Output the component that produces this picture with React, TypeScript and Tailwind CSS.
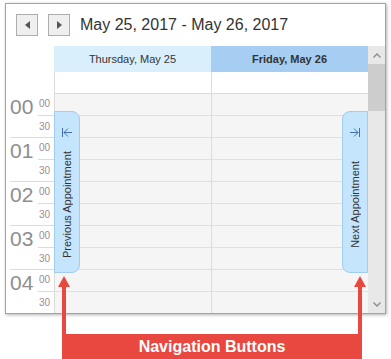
import React from "react";

const hours = ["00", "01", "02", "03", "04"];
const slots = Array.from({ length: 10 }, (_, i) => i);

function NavBtn({ dir }: { dir: "left" | "right" }) {
  return (
    <div className="w-[22px] h-[22px] border border-[#adadad] bg-[#efefef] flex items-center justify-center">
      <svg width="5" height="8" viewBox="0 0 5 8">
        {dir === "left" ? (
          <polygon points="5,0 5,8 0,4" fill="#555" />
        ) : (
          <polygon points="0,0 0,8 5,4" fill="#555" />
        )}
      </svg>
    </div>
  );
}

function Ruler() {
  return (
    <div className="w-[48px] shrink-0 flex flex-col bg-white">
      <div className="h-[48px] shrink-0" />
      {hours.map((h) => (
        <div key={h} className="ml-[4px] h-[44px] shrink-0 border-b border-[#dcdcdc] flex">
          <div className="w-[28px] pt-[2px] text-[21px] leading-[21px] text-[#8e8e8e]">{h}</div>
          <div className="w-[16px] flex flex-col">
            <div className="h-[22px] border-b border-[#dcdcdc] pl-[1px] pt-[5px] text-[10px] leading-[10px] text-[#9a8b96]">
              00
            </div>
            <div className="h-[21px] pl-[1px] pt-[6px] text-[10px] leading-[10px] text-[#9a8b96]">30</div>
          </div>
        </div>
      ))}
    </div>
  );
}

function DayColumn() {
  return (
    <div className="w-[157px] border-l border-[#dcdcdc] flex flex-col">
      <div className="h-[22px] shrink-0 border-b border-[#dcdcdc] bg-white" />
      {slots.map((s) => (
        <div key={s} className="h-[22px] shrink-0 border-b border-[#e0e0e0] bg-[#f5f5f5]" />
      ))}
    </div>
  );
}

function Scrollbar() {
  return (
    <div className="w-[17px] shrink-0 bg-[#e8e8e8] flex flex-col">
      <div className="h-[18px] flex items-center justify-center">
        <svg width="8" height="5" viewBox="0 0 8 5">
          <polyline points="0.5,4.5 4,1 7.5,4.5" fill="none" stroke="#8a8a8a" strokeWidth="1.3" />
        </svg>
      </div>
      <div className="h-[47px] bg-[#cdcdcd]" />
      <div className="flex-1" />
      <div className="h-[18px] flex items-center justify-center">
        <svg width="8" height="5" viewBox="0 0 8 5">
          <polyline points="0.5,0.5 4,4 7.5,0.5" fill="none" stroke="#8a8a8a" strokeWidth="1.3" />
        </svg>
      </div>
    </div>
  );
}

function ApptButton({ side }: { side: "prev" | "next" }) {
  const isPrev = side === "prev";
  return (
    <div
      className={
        isPrev
          ? "absolute left-[48px] top-[107px] w-[26px] h-[162px] bg-[#c4e5fc] border border-[#9fccf0] rounded-r-[8px] flex flex-col items-center"
          : "absolute left-[336px] top-[107px] w-[26px] h-[162px] bg-[#c4e5fc] border border-[#9fccf0] rounded-l-[8px] flex flex-col items-center"
      }
    >
      <div className="pt-[16px]">
        <svg width="10" height="9" viewBox="0 0 10 9">
          {isPrev ? (
            <g fill="none" stroke="#3f6fae" strokeWidth="1">
              <line x1="0.5" y1="0" x2="0.5" y2="9" />
              <line x1="2" y1="4.5" x2="10" y2="4.5" />
              <polyline points="6,0.5 2,4.5 6,8.5" />
            </g>
          ) : (
            <g fill="none" stroke="#3f6fae" strokeWidth="1">
              <line x1="9.5" y1="0" x2="9.5" y2="9" />
              <line x1="0" y1="4.5" x2="8" y2="4.5" />
              <polyline points="4,0.5 8,4.5 4,8.5" />
            </g>
          )}
        </svg>
      </div>
      <div className="flex-1 flex items-center justify-center">
        <span className="[writing-mode:vertical-rl] rotate-180 text-[11px] leading-[12px] text-[#333] whitespace-nowrap">
          {isPrev ? "Previous Appointment" : "Next Appointment"}
        </span>
      </div>
    </div>
  );
}

function Arrow() {
  return (
    <svg width="12" height="58" viewBox="0 0 12 58">
      <polygon points="6,0 12,11 8,11 8,58 4,58 4,11 0,11" fill="#e8483f" />
    </svg>
  );
}

export default function App() {
  return (
    <div
      className="relative w-[391px] h-[359px] bg-white overflow-hidden"
      style={{ fontFamily: '"Liberation Sans", Arial, sans-serif' }}
    >
      <div className="ml-[5px] mt-[3px] w-[381px] h-[311px] border border-[#a3a3a3] shadow-[1px_1px_3px_rgba(0,0,0,0.3)] bg-white flex flex-col relative overflow-hidden">
        <div className="h-[42px] shrink-0 flex items-center pl-[10px]">
          <NavBtn dir="left" />
          <div className="ml-[10px]">
            <NavBtn dir="right" />
          </div>
          <span className="ml-[10px] text-[16px] leading-[16px] text-[#333]">May 25, 2017 - May 26, 2017</span>
        </div>
        <div className="flex flex-1 min-h-0">
          <Ruler />
          <div className="w-[314px] shrink-0 flex flex-col">
            <div className="h-[26px] shrink-0 flex">
              <div className="w-[157px] bg-[#daeffc] flex items-center justify-center text-[11px] text-[#333]">
                Thursday, May 25
              </div>
              <div className="w-[157px] bg-[#a6cef2] flex items-center justify-center text-[11px] font-bold text-[#333]">
                Friday, May 26
              </div>
            </div>
            <div className="flex flex-1 min-h-0 overflow-hidden">
              <DayColumn />
              <DayColumn />
            </div>
          </div>
          <Scrollbar />
        </div>
        <ApptButton side="prev" />
        <ApptButton side="next" />
      </div>
      <div className="absolute left-[58px] top-[276px] w-[308px] h-[83px] flex flex-col">
        <div className="h-[58px] flex justify-between">
          <Arrow />
          <Arrow />
        </div>
        <div className="mx-[4px] h-[25px] bg-[#e8483f] flex items-center justify-center text-white font-bold text-[16px] leading-[25px]">
          Navigation Buttons
        </div>
      </div>
    </div>
  );
}
